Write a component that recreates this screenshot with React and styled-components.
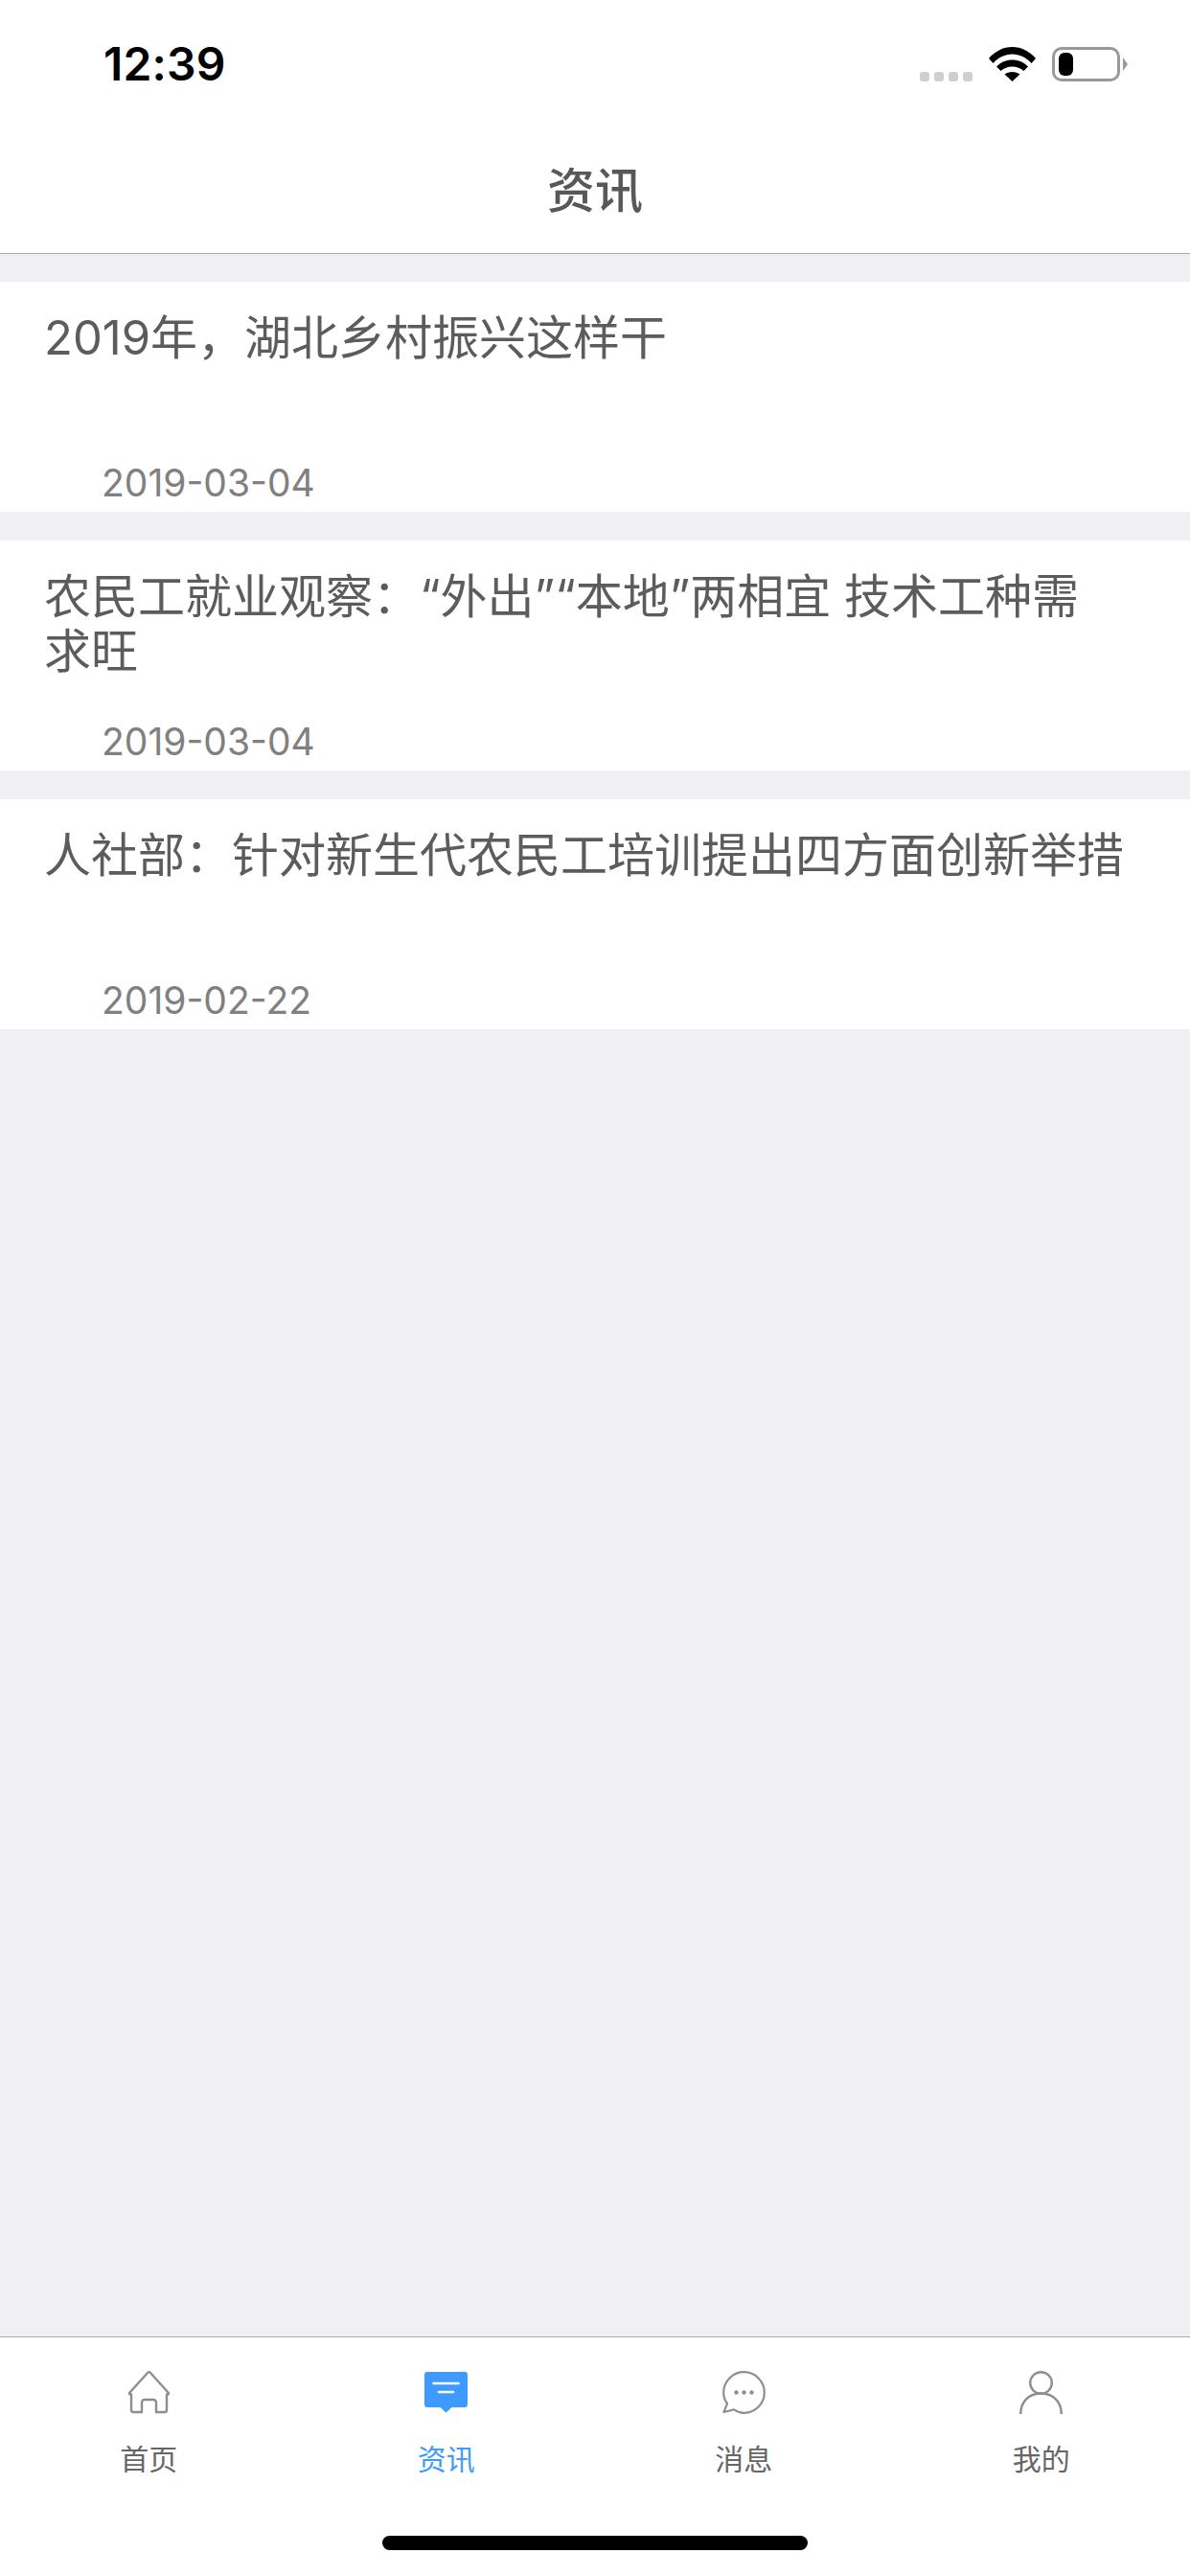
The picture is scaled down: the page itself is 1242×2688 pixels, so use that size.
import React from 'react'
import styled, { createGlobalStyle } from 'styled-components'

const GlobalStyle = createGlobalStyle`
  html, body {
    margin: 0;
    padding: 0;
    background: #efeff4;
  }
  * {
    box-sizing: border-box;
  }
`

const Page = styled.div`
  display: flex;
  flex-direction: column;
  width: 1242px;
  height: 2688px;
  background: #efeff4;
  font-family: 'Noto Sans CJK SC', 'Noto Sans', sans-serif;
`

const StatusBar = styled.div`
  display: flex;
  justify-content: space-between;
  align-items: flex-start;
  height: 132px;
  padding: 49px 65px 0 108px;
  background: #fff;
`

const Time = styled.span`
  font-family: Inter, 'Liberation Sans', sans-serif;
  font-size: 48px;
  font-weight: 600;
  letter-spacing: 0.2px;
  line-height: 36px;
  color: #000;
`

const StatusIcons = styled.div`
  display: flex;
  align-items: flex-end;
  height: 36px;
`

const SignalDots = styled.div`
  display: flex;
  gap: 5px;
  margin-right: 17px;
`

const Dot = styled.i`
  display: block;
  width: 10px;
  height: 10px;
  border-radius: 3px;
  background: #cfcfcf;
`

const Battery = styled.div`
  position: relative;
  width: 71px;
  height: 36px;
  margin-left: 17px;
  margin-right: 8px;
  padding: 3px 4px;
  border: 3px solid #999;
  border-radius: 10px;

  &::after {
    content: '';
    position: absolute;
    top: 8px;
    right: -11px;
    width: 0;
    height: 0;
    border-left: 5px solid #999;
    border-top: 7px solid transparent;
    border-bottom: 7px solid transparent;
  }
`

const BatteryLevel = styled.div`
  height: 100%;
  border-radius: 6px;
  background: #000;
`

const NavBar = styled.header`
  display: flex;
  justify-content: center;
  align-items: center;
  height: 133px;
  padding-bottom: 6px;
  background: #fff;
  border-bottom: 1px solid #aaa;
  font-size: 50px;
  font-weight: 500;
  color: #585858;
`

const List = styled.main`
  flex: 1;
  display: flex;
  flex-direction: column;
  gap: 30px;
  padding-top: 29px;
`

const Card = styled.article`
  display: flex;
  flex-direction: column;
  justify-content: space-between;
  height: 240px;
  padding: 31px 68px 5px 46px;
  background: #fff;
`

const CardTitle = styled.h2`
  margin: 0;
  font-family: Inter, 'Noto Sans CJK SC', sans-serif;
  font-size: 49px;
  font-weight: 400;
  line-height: 56.5px;
  color: #5c5c5c;
`

const CardDate = styled.time`
  padding-left: 60px;
  font-family: Inter, 'Liberation Sans', sans-serif;
  font-size: 39px;
  line-height: 50px;
  color: #808080;
`

const TabBar = styled.footer`
  display: flex;
  flex-direction: column;
  align-items: center;
  height: 250px;
  background: #fff;
  border-top: 1px solid #aaa;
`

const Tabs = styled.nav`
  display: grid;
  grid-template-columns: repeat(4, 1fr);
  width: 100%;
  padding-top: 35px;
`

const Tab = styled.div`
  display: flex;
  flex-direction: column;
  align-items: center;
  font-size: 30px;
  line-height: 44px;
  color: ${p => (p.$active ? '#3d9bff' : '#666')};

  svg {
    display: block;
    margin-bottom: 23px;
  }
`

const HomeIndicator = styled.div`
  width: 444px;
  height: 15px;
  margin-top: 60px;
  border-radius: 8px;
  background: #000;
`

const WifiIcon = () => (
  <svg width="49" height="36" viewBox="0 0 49 36" fill="#000">
    <path d="M0 12C6.5 4.5 15 0 24.5 0S42.5 4.5 49 12L44.5 17C39 11 32 7.5 24.5 7.5S10 11 4.5 17Z" />
    <path d="M8 20.5C12.5 16 18 13.5 24.5 13.5S36.5 16 41 20.5L36.5 25C33 22 29 20.5 24.5 20.5S16 22 12.5 25Z" />
    <path d="M16.5 28.5C18.5 27 21.5 26 24.5 26S30.5 27 32.5 28.5L24.5 36Z" />
  </svg>
)

const HomeIcon = () => (
  <svg width="45" height="45" viewBox="0 0 45 45" fill="none" stroke="#8e8e8e" strokeWidth="2.4" strokeLinejoin="round">
    <path d="M4 24.5H3a1 1 0 0 1-.7-1.8L21 2a2 2 0 0 1 3 0L42.7 22.7a1 1 0 0 1-.7 1.8H41V41a2 2 0 0 1-2 2H30V33a3 3 0 0 0-3-3H18a3 3 0 0 0-3 3V43H6a2 2 0 0 1-2-2Z" />
  </svg>
)

const NewsIcon = () => (
  <svg width="45" height="45" viewBox="0 0 45 45">
    <path fill="#3d9bff" d="M3 1H42a3 3 0 0 1 3 3V35a3 3 0 0 1-3 3H28.500L22.500 43.500L16.500 38H3a3 3 0 0 1-3-3V4a3 3 0 0 1 3-3Z" />
    <path stroke="#fff" strokeWidth="2.6" strokeLinecap="round" d="M9.500 13H35.500M15 22H30" />
  </svg>
)

const MessageIcon = () => (
  <svg width="45" height="45" viewBox="0 0 45 45">
    <path fill="none" stroke="#8e8e8e" strokeWidth="2.2" strokeLinejoin="round" d="M5 34C2.500 31 1.200 27 1.200 22.500C1.200 10.800 10.800 1.200 22.500 1.200S43.800 10.800 43.800 22.500S34.200 43.800 22.500 43.800C18.700 43.800 15.200 42.500 12 40.300L1.500 43Z" />
    <circle cx="14.500" cy="22.500" r="2.200" fill="#8e8e8e" />
    <circle cx="22.500" cy="22.500" r="2.200" fill="#8e8e8e" />
    <circle cx="30.500" cy="22.500" r="2.200" fill="#8e8e8e" />
  </svg>
)

const UserIcon = () => (
  <svg width="45" height="45" viewBox="0 0 45 45" fill="none" stroke="#8e8e8e" strokeWidth="2.4">
    <circle cx="22.500" cy="12.500" r="11.300" />
    <path d="M1.200 45C1.200 32 10 23.500 22.500 23.500S43.800 32 43.800 45" />
  </svg>
)

const articles = [
  { title: '2019年，湖北乡村振兴这样干', date: '2019-03-04' },
  { title: '农民工就业观察：“外出”“本地”两相宜 技术工种需求旺', date: '2019-03-04' },
  { title: '人社部：针对新生代农民工培训提出四方面创新举措', date: '2019-02-22' },
]

const tabs = [
  { label: '首页', icon: <HomeIcon /> },
  { label: '资讯', icon: <NewsIcon />, active: true },
  { label: '消息', icon: <MessageIcon /> },
  { label: '我的', icon: <UserIcon /> },
]

export default function App() {
  return (
    <Page lang="zh-CN">
      <GlobalStyle />
      <StatusBar>
        <Time>12:39</Time>
        <StatusIcons>
          <SignalDots>
            <Dot />
            <Dot />
            <Dot />
            <Dot />
          </SignalDots>
          <WifiIcon />
          <Battery>
            <BatteryLevel style={{ width: '26%' }} />
          </Battery>
        </StatusIcons>
      </StatusBar>
      <NavBar>资讯</NavBar>
      <List>
        {articles.map(a => (
          <Card key={a.title}>
            <CardTitle>{a.title}</CardTitle>
            <CardDate>{a.date}</CardDate>
          </Card>
        ))}
      </List>
      <TabBar>
        <Tabs>
          {tabs.map(t => (
            <Tab key={t.label} $active={t.active}>
              {t.icon}
              {t.label}
            </Tab>
          ))}
        </Tabs>
        <HomeIndicator />
      </TabBar>
    </Page>
  )
}
